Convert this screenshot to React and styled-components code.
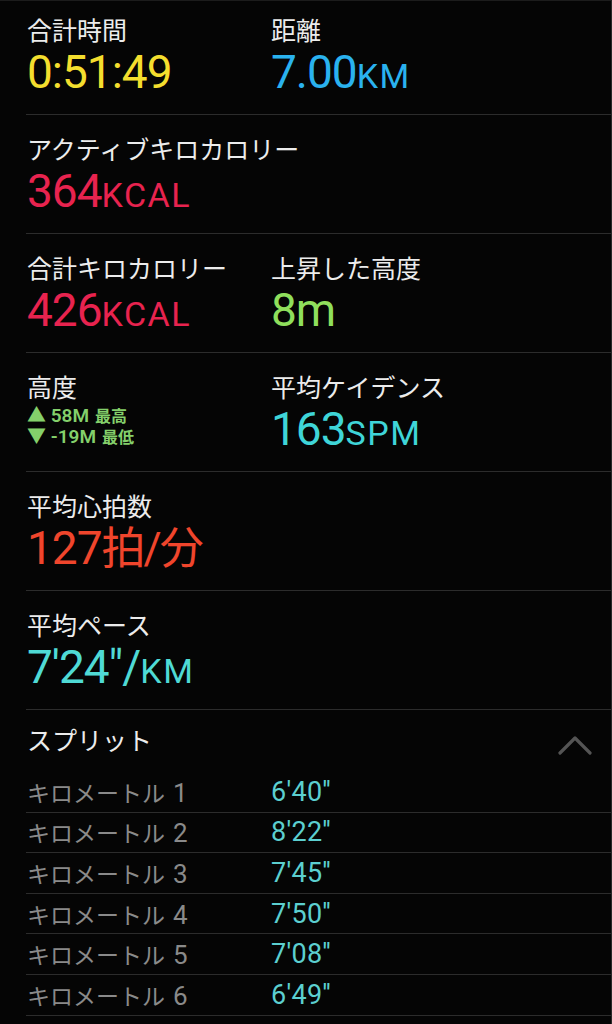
import React from 'react';
import styled, { createGlobalStyle } from 'styled-components';

const GlobalStyle = createGlobalStyle`
  html, body {
    margin: 0;
    padding: 0;
    background: #050505;
  }
`;

const Page = styled.div`
  width: 612px;
  height: 1024px;
  box-sizing: border-box;
  overflow: hidden;
  background: #050505;
  border-top: 1px solid #1c1c1c;
  border-right: 1px solid #2a2a2a;
  font-family: Roboto, "Noto Sans CJK JP", sans-serif;
`;

const Section = styled.section`
  box-sizing: border-box;
  height: ${props => props.height || 119}px;
  margin-left: 26px;
  padding: ${props => props.top || 19}px 0 0 1px;
  border-bottom: 1px solid #2c2c2c;
  display: grid;
  grid-template-columns: 244px 1fr;
  align-content: start;
`;

const Metric = styled.div`
  display: flex;
  flex-direction: column;
`;

const Label = styled.div`
  font-family: "Noto Sans CJK JP", sans-serif;
  font-size: 25px;
  line-height: 29px;
  color: #ececec;
  white-space: nowrap;
`;

const Value = styled.div`
  margin-top: 4px;
  font-family: Roboto, "Noto Sans CJK JP", sans-serif;
  font-size: 46px;
  line-height: 48px;
  letter-spacing: -1px;
  color: ${props => props.color};
  white-space: nowrap;
`;

const Unit = styled.span`
  font-size: 34px;
  letter-spacing: 1.5px;
`;

const Kanji = styled.span`
  font-size: 44px;
  letter-spacing: -2px;
`;

const AltList = styled.div`
  margin-top: 4px;
  display: flex;
  flex-direction: column;
  color: #84d06b;
  font-size: 19px;
  line-height: 21px;
  font-weight: 600;
`;

const AltRow = styled.div`
  display: flex;
  align-items: center;
  gap: 6px;
  height: 21px;
  white-space: nowrap;
`;

const AltWord = styled.span`
  font-family: "Noto Sans CJK JP", sans-serif;
  font-weight: 700;
  font-size: 16px;
  line-height: 21px;
`;

const SplitHeader = styled.div`
  box-sizing: border-box;
  height: 62px;
  margin-left: 26px;
  padding: 15px 19px 0 1px;
  display: flex;
  justify-content: space-between;
  align-items: flex-start;
`;

const SplitRow = styled.div`
  box-sizing: border-box;
  height: 40.6px;
  margin-left: 26px;
  padding-left: 1px;
  border-bottom: 1px solid #2c2c2c;
  display: grid;
  grid-template-columns: 244px 1fr;
  align-items: center;
`;

const SplitLabel = styled.span`
  font-family: "Noto Sans CJK JP", sans-serif;
  font-size: 23px;
  color: #8a8a8a;
  white-space: nowrap;
`;

const SplitNum = styled.span`
  font-family: Roboto, sans-serif;
  font-size: 26px;
  margin-left: 8px;
`;

const SplitValue = styled.span`
  font-family: Roboto, sans-serif;
  font-size: 27px;
  letter-spacing: 0.3px;
  color: #5ccfd0;
`;

const Chevron = () => (
  <svg width="34" height="22" viewBox="0 0 34 22" style={{ marginTop: 9 }}>
    <polyline points="2,19 17,4 32,19" fill="none" stroke="#545454" strokeWidth="3.2" strokeLinecap="round" strokeLinejoin="round" />
  </svg>
);

const splits = [
  ['1', "6'40''"],
  ['2', "8'22''"],
  ['3', "7'45''"],
  ['4', "7'50''"],
  ['5', "7'08''"],
  ['6', "6'49''"],
];

export default function App() {
  return (
    <Page>
      <GlobalStyle />
      <Section height={114} top={14}>
        <Metric>
          <Label>合計時間</Label>
          <Value color="#f4de2e">0:51:49</Value>
        </Metric>
        <Metric>
          <Label>距離</Label>
          <Value color="#2ab2ef">7.00<Unit>KM</Unit></Value>
        </Metric>
      </Section>

      <Section>
        <Metric>
          <Label>アクティブキロカロリー</Label>
          <Value color="#e8234f">364<Unit>KCAL</Unit></Value>
        </Metric>
      </Section>

      <Section>
        <Metric>
          <Label>合計キロカロリー</Label>
          <Value color="#e8234f">426<Unit>KCAL</Unit></Value>
        </Metric>
        <Metric>
          <Label>上昇した高度</Label>
          <Value color="#8fdf5c">8m</Value>
        </Metric>
      </Section>

      <Section>
        <Metric>
          <Label>高度</Label>
          <AltList>
            <AltRow>▲ 58M <AltWord>最高</AltWord></AltRow>
            <AltRow>▼ -19M <AltWord>最低</AltWord></AltRow>
          </AltList>
        </Metric>
        <Metric>
          <Label>平均ケイデンス</Label>
          <Value color="#3fd5d8">163<Unit>SPM</Unit></Value>
        </Metric>
      </Section>

      <Section>
        <Metric>
          <Label>平均心拍数</Label>
          <Value color="#f0452c">127<Kanji>拍/分</Kanji></Value>
        </Metric>
      </Section>

      <Section>
        <Metric>
          <Label>平均ペース</Label>
          <Value color="#4fdad5">7'24"/<Unit>KM</Unit></Value>
        </Metric>
      </Section>

      <SplitHeader>
        <Label>スプリット</Label>
        <Chevron />
      </SplitHeader>

      {splits.map(([n, v]) => (
        <SplitRow key={n}>
          <SplitLabel>キロメートル<SplitNum>{n}</SplitNum></SplitLabel>
          <SplitValue>{v}</SplitValue>
        </SplitRow>
      ))}
    </Page>
  );
}
